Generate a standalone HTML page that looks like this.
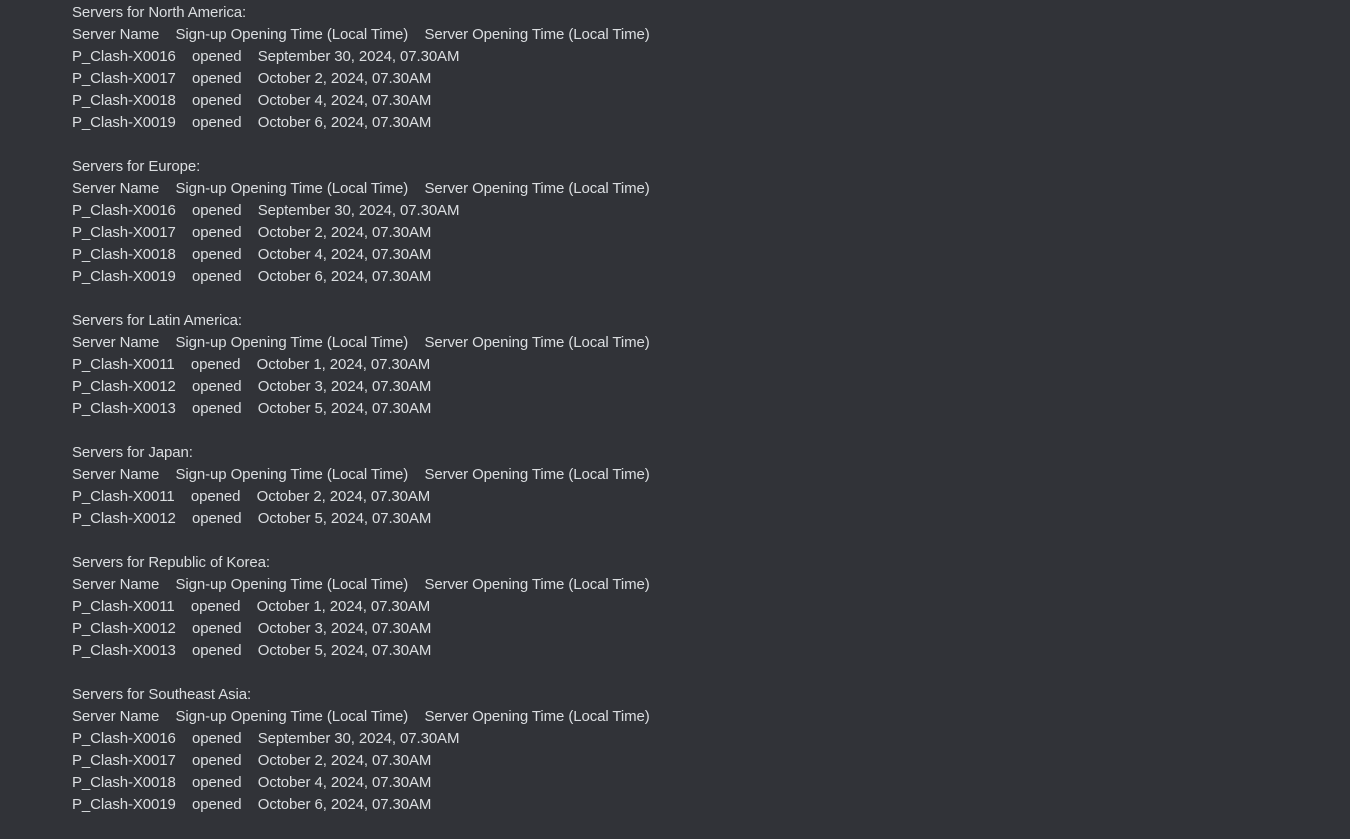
<!DOCTYPE html>
<html><head><meta charset="utf-8"><style>
html,body{margin:0;padding:0;background:#313338;width:1350px;height:839px;overflow:hidden}
.c{position:absolute;left:72px;top:2px;color:#dbdee1;font-family:"Liberation Sans",sans-serif;font-size:15px;line-height:22px;white-space:pre;letter-spacing:-0.1px}
</style></head><body><div class="c">Servers for North America:
Server Name    Sign-up Opening Time (Local Time)    Server Opening Time (Local Time)
P_Clash-X0016    opened    September 30, 2024, 07.30AM
P_Clash-X0017    opened    October 2, 2024, 07.30AM
P_Clash-X0018    opened    October 4, 2024, 07.30AM
P_Clash-X0019    opened    October 6, 2024, 07.30AM

Servers for Europe:
Server Name    Sign-up Opening Time (Local Time)    Server Opening Time (Local Time)
P_Clash-X0016    opened    September 30, 2024, 07.30AM
P_Clash-X0017    opened    October 2, 2024, 07.30AM
P_Clash-X0018    opened    October 4, 2024, 07.30AM
P_Clash-X0019    opened    October 6, 2024, 07.30AM

Servers for Latin America:
Server Name    Sign-up Opening Time (Local Time)    Server Opening Time (Local Time)
P_Clash-X0011    opened    October 1, 2024, 07.30AM
P_Clash-X0012    opened    October 3, 2024, 07.30AM
P_Clash-X0013    opened    October 5, 2024, 07.30AM

Servers for Japan:
Server Name    Sign-up Opening Time (Local Time)    Server Opening Time (Local Time)
P_Clash-X0011    opened    October 2, 2024, 07.30AM
P_Clash-X0012    opened    October 5, 2024, 07.30AM

Servers for Republic of Korea:
Server Name    Sign-up Opening Time (Local Time)    Server Opening Time (Local Time)
P_Clash-X0011    opened    October 1, 2024, 07.30AM
P_Clash-X0012    opened    October 3, 2024, 07.30AM
P_Clash-X0013    opened    October 5, 2024, 07.30AM

Servers for Southeast Asia:
Server Name    Sign-up Opening Time (Local Time)    Server Opening Time (Local Time)
P_Clash-X0016    opened    September 30, 2024, 07.30AM
P_Clash-X0017    opened    October 2, 2024, 07.30AM
P_Clash-X0018    opened    October 4, 2024, 07.30AM
P_Clash-X0019    opened    October 6, 2024, 07.30AM</div></body></html>
